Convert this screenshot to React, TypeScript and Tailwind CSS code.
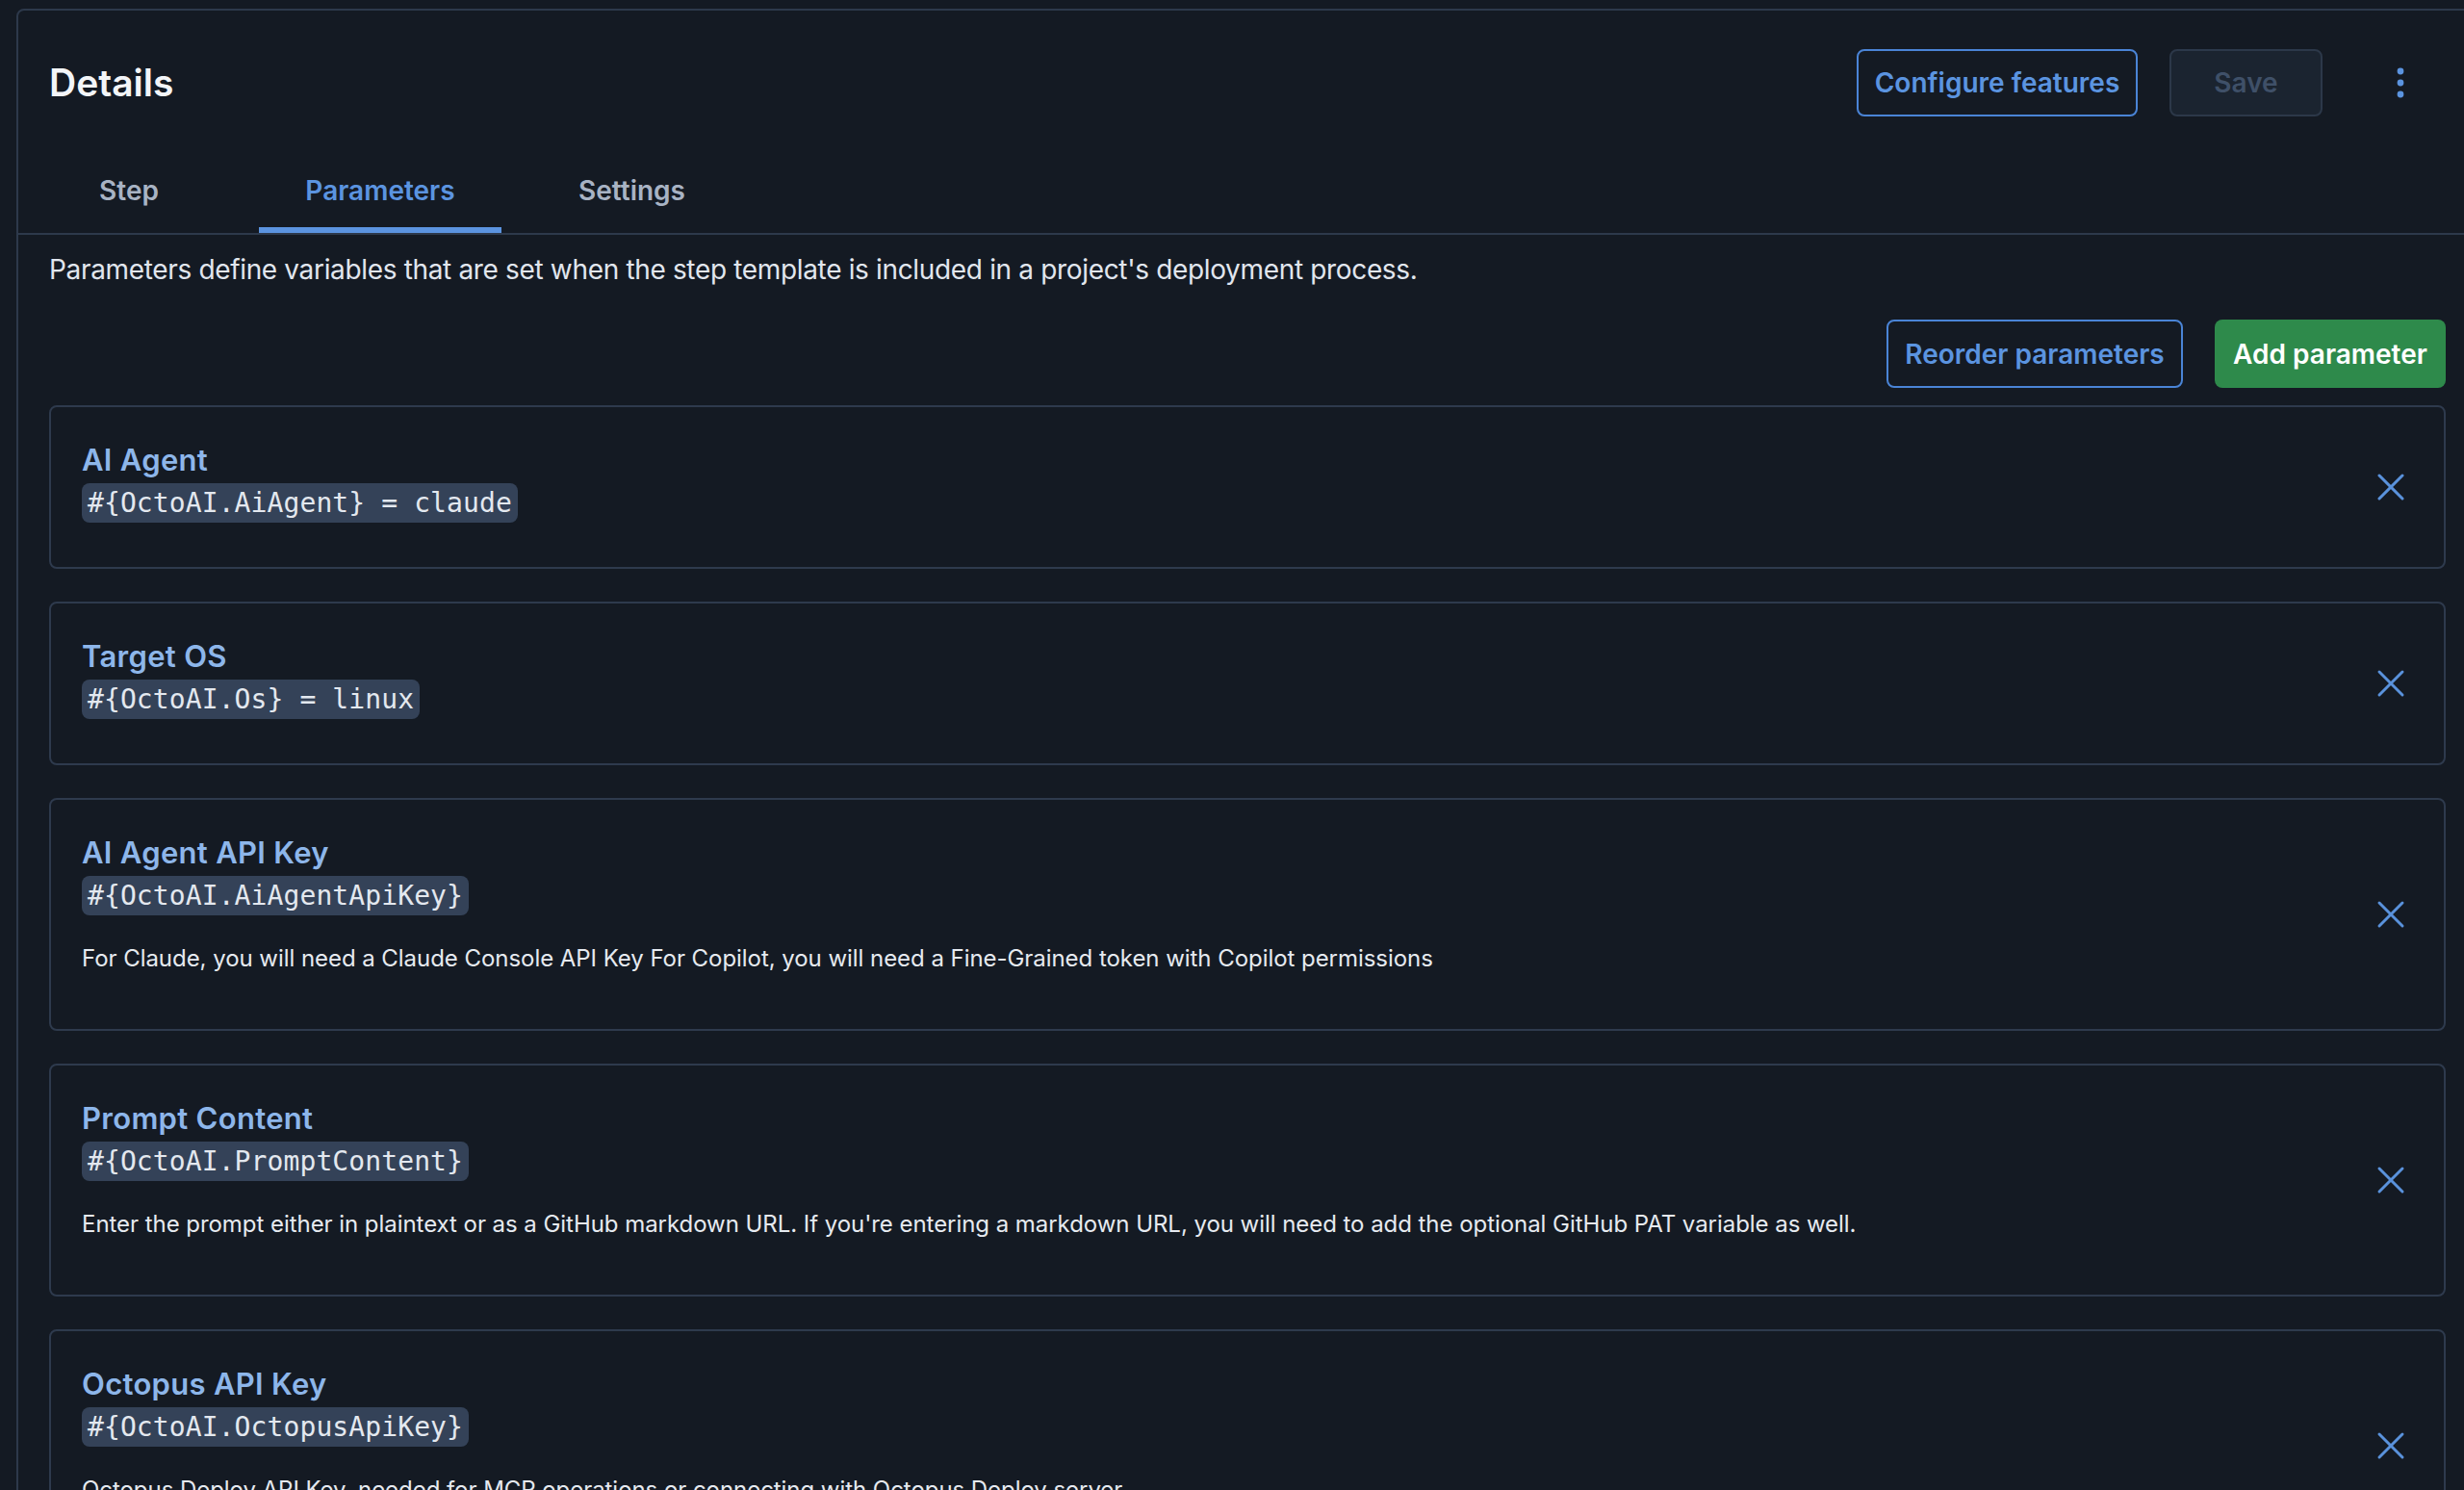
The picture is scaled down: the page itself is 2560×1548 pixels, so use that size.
import { X } from "lucide-react";

type Param = {
  label: string;
  variable: string;
  description?: string;
};

const params: Param[] = [
  { label: "AI Agent", variable: "#{OctoAI.AiAgent} = claude" },
  { label: "Target OS", variable: "#{OctoAI.Os} = linux" },
  {
    label: "AI Agent API Key",
    variable: "#{OctoAI.AiAgentApiKey}",
    description:
      "For Claude, you will need a Claude Console API Key For Copilot, you will need a Fine-Grained token with Copilot permissions",
  },
  {
    label: "Prompt Content",
    variable: "#{OctoAI.PromptContent}",
    description:
      "Enter the prompt either in plaintext or as a GitHub markdown URL. If you're entering a markdown URL, you will need to add the optional GitHub PAT variable as well.",
  },
  {
    label: "Octopus API Key",
    variable: "#{OctoAI.OctopusApiKey}",
    description:
      "Octopus Deploy API Key, needed for MCP operations or connecting with Octopus Deploy server.",
  },
];

function ParameterCard({ param }: { param: Param }) {
  return (
    <div className="flex items-center rounded-[8px] border-2 border-[#2e3a4d] pl-[32px] pr-[31px]">
      <div className="flex-1 pt-[32px] pb-[46px]">
        <div className="text-[31px] font-semibold leading-[45px] tracking-[0.3px] text-[#8db6ea]">
          {param.label}
        </div>
        <div className="mt-[2px]">
          <code className="inline-block rounded-[8px] bg-[#344258] px-[6px] font-['DejaVu_Sans_Mono',monospace] text-[28px] leading-[41px] tracking-[0.1px] text-[#e3e8ef]">
            {param.variable}
          </code>
        </div>
        {param.description && (
          <p className="mt-[27px] mb-[9px] text-[24px] leading-[36px] tracking-[-0.05px] text-[#e6eaf0]">
            {param.description}
          </p>
        )}
      </div>
      <button className="flex h-[48px] w-[48px] items-center justify-center text-[#5a92dc]">
        <X className="h-[48px] w-[48px]" strokeWidth={1.5} />
      </button>
    </div>
  );
}

export default function App() {
  const tabs = [
    { name: "Step", width: "w-[230px]" },
    { name: "Parameters", width: "w-[252px]", active: true },
    { name: "Settings", width: "w-[231px]" },
  ];

  return (
    <div className="h-screen w-[2560px] overflow-hidden bg-[#141a23] pl-[17px] pt-[9px] font-['Inter',sans-serif]">
      <div className="w-[2558px] rounded-tl-[8px] border-2 border-[#2d394b] bg-[#141a23]">
        {/* header */}
        <div className="flex items-center pl-[32px] pr-[32px] pt-[40px] pb-[33px]">
          <h2 className="flex-1 text-[39px] font-semibold leading-[48px] text-[#f3f5f8]">
            Details
          </h2>
          <button className="flex h-[70px] w-[292px] items-center justify-center rounded-[8px] border-2 border-[#4a84d6] text-[28px] font-semibold text-[#5b94e0]">
            Configure features
          </button>
          <button className="ml-[33px] flex h-[70px] w-[159px] items-center justify-center rounded-[8px] border-2 border-[#2c3849] bg-[#1b2430] text-[28px] font-semibold text-[#3f5068]">
            Save
          </button>
          <button className="ml-[57px] mr-[23px] flex h-[48px] w-[48px] items-center justify-center">
            <svg width="48" height="48" viewBox="0 0 48 48" fill="#5b94e0">
              <circle cx="24" cy="12" r="3.4" />
              <circle cx="24" cy="24" r="3.4" />
              <circle cx="24" cy="36" r="3.4" />
            </svg>
          </button>
        </div>

        {/* tabs */}
        <div className="flex gap-[20px] border-b-2 border-[#2d394b]">
          {tabs.map((t) => (
            <div
              key={t.name}
              className={`flex h-[88px] items-center justify-center border-b-[6px] pt-[6px] text-[28px] font-semibold ${t.width} ${
                t.active
                  ? "border-[#5b94e0] text-[#5b94e0]"
                  : "border-transparent text-[#a8b3c4]"
              }`}
            >
              {t.name}
            </div>
          ))}
        </div>

        {/* body */}
        <div className="px-[32px] pt-[15px]">
          <p className="text-[28px] leading-[42px] tracking-[-0.34px] text-[#e1e6ee]">
            Parameters define variables that are set when the step template is included in a
            project's deployment process.
          </p>
          <div className="mt-[31px] flex justify-end gap-[33px]">
            <button className="flex h-[71px] w-[308px] items-center justify-center rounded-[8px] border-2 border-[#4a84d6] text-[28px] font-semibold text-[#5b94e0]">
              Reorder parameters
            </button>
            <button className="flex h-[71px] w-[240px] items-center justify-center rounded-[8px] bg-[#2e8a4b] text-[28px] font-semibold text-white">
              Add parameter
            </button>
          </div>
          <div className="mt-[18px] flex flex-col gap-[34px] pb-[40px]">
            {params.map((p) => (
              <ParameterCard key={p.label} param={p} />
            ))}
          </div>
        </div>
      </div>
    </div>
  );
}
